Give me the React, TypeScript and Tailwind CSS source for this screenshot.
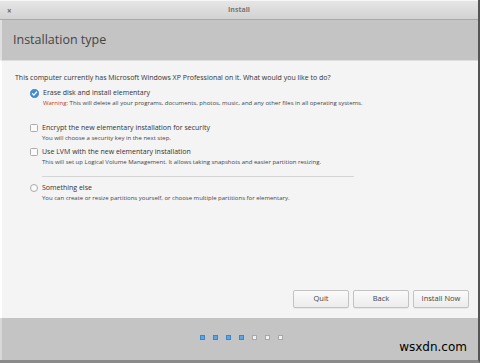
const options = [
  {
    id: "erase",
    kind: "check",
    checked: true,
    title: "Erase disk and install elementary",
    warning: true,
    desc: "This will delete all your programs, documents, photos, music, and any other files in all operating systems.",
  },
  {
    id: "encrypt",
    kind: "box",
    checked: false,
    title: "Encrypt the new elementary installation for security",
    desc: "You will choose a security key in the next step.",
  },
  {
    id: "lvm",
    kind: "box",
    checked: false,
    title: "Use LVM with the new elementary installation",
    desc: "This will set up Logical Volume Management. It allows taking snapshots and easier partition resizing.",
  },
  {
    id: "else",
    kind: "radio",
    checked: false,
    title: "Something else",
    desc: "You can create or resize partitions yourself, or choose multiple partitions for elementary.",
  },
];

const Marker = ({ kind }: { kind: string }) => {
  if (kind === "check") {
    return (
      <svg width="9" height="9" viewBox="0 0 9 9" className="shrink-0">
        <circle cx="4.5" cy="4.5" r="4.2" fill="#3d8fd6" stroke="#2f78b8" strokeWidth="0.6" />
        <path d="M2.4 4.6 L3.9 6.1 L6.6 3" fill="none" stroke="#fff" strokeWidth="1.2" strokeLinecap="round" />
      </svg>
    );
  }
  if (kind === "radio") {
    return <div className="w-[8px] h-[8px] shrink-0 rounded-full border border-[#aaaaaa] bg-[#fafafa]" />;
  }
  return <div className="w-[8px] h-[8px] shrink-0 rounded-[1.5px] border border-[#aaaaaa] bg-[#fafafa]" />;
};

const Option = ({ o }: { o: (typeof options)[number] }) => (
  <div className="flex gap-[4px]">
    <div className="pt-[2px]">
      <Marker kind={o.kind} />
    </div>
    <div className="flex flex-col">
      <div className="text-[7px] leading-[11px] text-[#333]">{o.title}</div>
      <div className="text-[6px] leading-[10px] text-[#444]">
        {o.warning && <span className="text-[#c0392b]">Warning: </span>}
        {o.desc}
      </div>
    </div>
  </div>
);

export default function App() {
  return (
    <div className="w-[480px] h-[363px] flex flex-col bg-[#c4c4c4] font-['Open_Sans',sans-serif] overflow-hidden border-r-2 border-r-[#555] border-b-[3px] border-b-[#8a8a8a]">
      {/* title bar */}
      <div className="h-[20px] shrink-0 relative flex items-center justify-center bg-gradient-to-b from-[#e6e6e6] to-[#d2d2d2] border-t border-t-[#f6f6f6] border-b border-b-[#a8a8a8]">
        <span className="absolute left-[7px] top-[4px] text-[8px] text-[#666] font-bold">×</span>
        <span className="text-[7px] font-bold text-[#777]">Install</span>
      </div>

      <div className="h-[40px] shrink-0 flex items-center pl-[11px] border-l-2 border-l-[#e0e0e0]">
        <h1 className="text-[12.5px] text-[#444] leading-none">Installation type</h1>
      </div>

      <div className="h-[258px] shrink-0 bg-[#f4f4f4] border-t border-t-[#dedede] border-l-2 border-l-[#ffffff] flex flex-col pl-[13px] pr-[9px] pt-[11px] pb-[10px]">
        <p className="text-[7px] leading-[11px] text-[#333]">
          This computer currently has Microsoft Windows XP Professional on it. What would you like to do?
        </p>

        <div className="pl-[15px] mt-[4px] flex flex-col">
          <Option o={options[0]} />
          <div className="mt-[14px] flex flex-col gap-[3px]">
            <Option o={options[1]} />
            <Option o={options[2]} />
          </div>
          <div className="ml-[12px] mt-[9px] w-[312px] h-px bg-[#d6d6d6]" />
          <div className="mt-[5px]">
            <Option o={options[3]} />
          </div>
        </div>

        <div className="mt-auto flex justify-end gap-[4px]">
          {["Quit", "Back", "Install Now"].map((b) => (
            <button
              key={b}
              className="w-[56px] h-[18px] rounded-[2px] border border-[#c2c2c2] bg-gradient-to-b from-[#fafafa] to-[#ececec] text-[7.5px] text-[#444] shadow-[0_1px_0_rgba(0,0,0,0.05)]"
            >
              {b}
            </button>
          ))}
        </div>
      </div>

      <div className="flex-1 relative flex items-center justify-center border-l-2 border-l-[#d8d8d8]">
        <div className="flex gap-[8px] -mt-[3px] ml-[2px]">
          {[0, 1, 2, 3, 4, 5, 6].map((i) => (
            <div
              key={i}
              className={
                i < 4
                  ? "w-[5px] h-[5px] bg-[#5aa8e8] border border-[#3a86c8]"
                  : "w-[5px] h-[5px] bg-[#f2f2f2] border border-[#a8a8a8]"
              }
            />
          ))}
        </div>
        <span className="absolute right-[11px] bottom-[4px] text-[12px] text-black font-['DejaVu_Sans',sans-serif]">
          wsxdn.com
        </span>
      </div>
    </div>
  );
}
